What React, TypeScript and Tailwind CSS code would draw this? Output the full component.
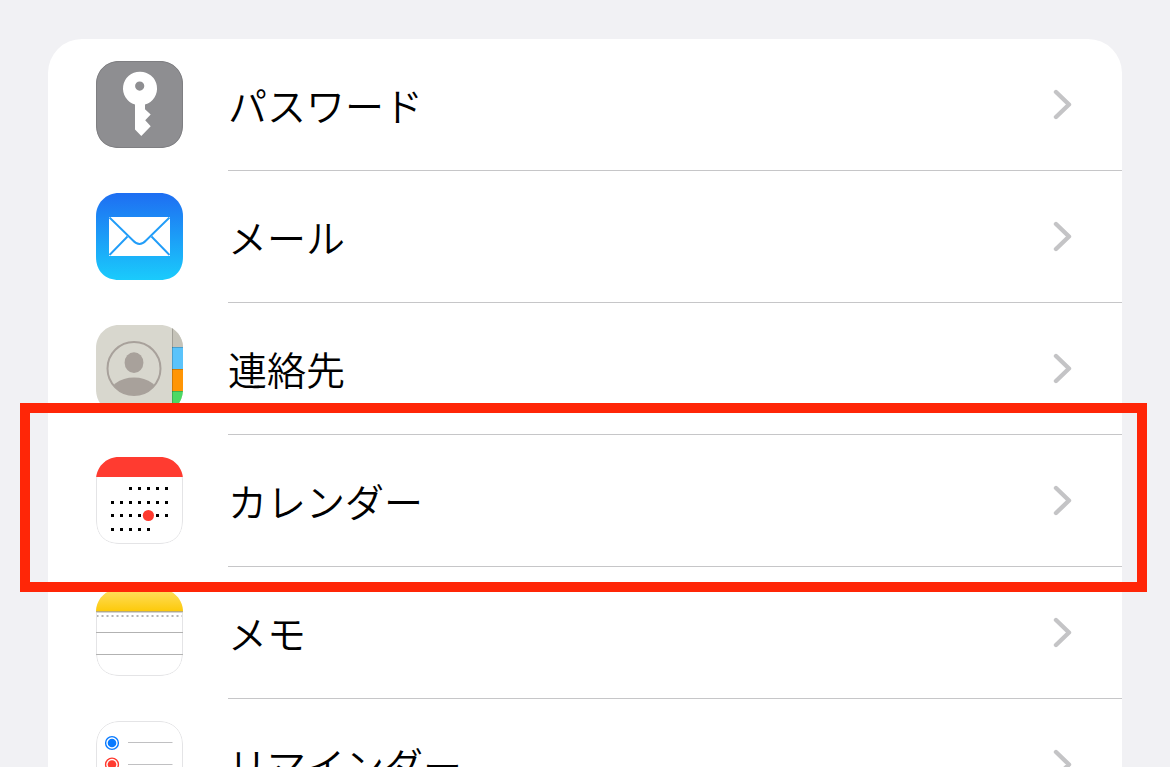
import type { ReactNode } from 'react';

type IconFrameProps = { id: string; outline?: string; overlay?: ReactNode; children: ReactNode };

function IconFrame({ id, outline, overlay, children }: IconFrameProps) {
  return (
    <svg viewBox="0 0 87 87" className="mb-px size-[87px] shrink-0" aria-hidden="true">
      <defs>
        <clipPath id={id}>
          <path d="M23 0H64C77 0 87 10 87 23V64C87 78 78 87 64 87H23C9 87 0 78 0 64V23C0 10 10 0 23 0Z" />
        </clipPath>
      </defs>
      <g clipPath={`url(#${id})`}>
        {children}
        {outline && (
          <path
            d="M23 .5H64C77 .5 86.500 10 86.500 23V64C86.500 78 78 86.500 64 86.500H23C9 86.500 .5 78 .5 64V23C.5 10 10 .5 23 .5Z"
            fill="none"
            stroke={outline}
          />
        )}
        {overlay}
      </g>
    </svg>
  );
}

function PasswordIcon() {
  return (
    <IconFrame id="clip-password" outline="#7f7f82">
      <rect width="87" height="87" fill="#8e8e91" />
      <path
        fill="#fff"
        fillRule="evenodd"
        d="M43.700 10.700a16.800 16.800 0 0 1 5.300 32.900V48.200L54.700 53.500L49.200 59.300L54.700 65.300L45.300 75L39 68.500V43.600A16.800 16.800 0 0 1 43.700 10.700ZM43.700 20.500a4.600 4.600 0 1 0 0 9.200a4.600 4.600 0 0 0 0-9.200Z"
      />
    </IconFrame>
  );
}

function MailIcon() {
  return (
    <IconFrame id="clip-mail">
      <linearGradient id="mail-sky" x1="0" y1="0" x2="0" y2="1">
        <stop offset="0" stopColor="#1e6ef2" />
        <stop offset="1" stopColor="#1acbfc" />
      </linearGradient>
      <rect width="87" height="87" fill="url(#mail-sky)" />
      <rect x="13" y="24" width="61" height="39" fill="#fff" />
      <g fill="none" stroke="#229df8" strokeWidth="1.900">
        <path d="M13.500 24.500L37 47.500Q43.500 54.500 50 47.500L73.500 24.500" />
        <path d="M31.500 43.500L13.500 62M55.500 43.500L73.500 62" />
      </g>
    </IconFrame>
  );
}

function ContactsIcon() {
  return (
    <IconFrame id="clip-contacts">
      <rect width="87" height="87" fill="#d8d7ce" />
      <rect x="76" width="11" height="22" fill="#c5c3b9" />
      <rect x="76" y="22" width="11" height="22" fill="#5ac3fb" />
      <rect x="76" y="44" width="11" height="22" fill="#ff9505" />
      <rect x="76" y="66" width="11" height="21" fill="#4cd964" />
      <path d="M76.500 0V87M76 22.500H87M76 44.500H87M76 66.500H87" stroke="#000" strokeOpacity=".18" />
      <clipPath id="clip-person">
        <circle cx="38" cy="43.500" r="26.500" />
      </clipPath>
      <g fill="#a8a19b">
        <ellipse cx="38" cy="37.700" rx="9.400" ry="10.400" />
        <ellipse cx="38" cy="72" rx="26" ry="19.500" clipPath="url(#clip-person)" />
      </g>
      <circle cx="38" cy="43.500" r="26.500" fill="none" stroke="#a8a19b" strokeWidth="2" />
    </IconFrame>
  );
}

const calendarRows = [
  { y: 30, from: 2, to: 6 },
  { y: 44, from: 0, to: 6 },
  { y: 57, from: 0, to: 6 },
  { y: 71, from: 0, to: 4 },
];

function CalendarIcon() {
  return (
    <IconFrame id="clip-calendar" outline="#e4e4e6" overlay={<rect width="87" height="20" fill="#ff3b30" />}>
      <rect width="87" height="87" fill="#fff" />
      {calendarRows.map(({ y, from, to }) =>
        Array.from({ length: to - from + 1 }, (_, i) => (
          <rect key={`${y}-${i}`} x={15 + (from + i) * 9} y={y} width="3" height="3" fill="#000" />
        )),
      )}
      <circle cx="52.400" cy="58.500" r="5.600" fill="#ff3b30" />
    </IconFrame>
  );
}

function NotesIcon() {
  return (
    <IconFrame
      id="clip-notes"
      outline="#e4e4e6"
      overlay={
        <>
          <linearGradient id="notes-gold" x1="0" y1="0" x2="0" y2="1">
            <stop offset="0" stopColor="#ffdf63" />
            <stop offset="1" stopColor="#fdca0b" />
          </linearGradient>
          <rect width="87" height="22" fill="url(#notes-gold)" />
          <rect y="22" width="87" height="1" fill="#b9aa77" />
          <rect y="23" width="87" height="1" fill="#d4d4d4" />
          <path d="M0 43.500H87M0 65.500H87" stroke="#b2b2b2" />
        </>
      }
    >
      <rect width="87" height="87" fill="#fff" />
      <path d="M.5 27H87" stroke="#b4b4b6" strokeWidth="2" strokeDasharray="2 3" />
    </IconFrame>
  );
}

const reminderItems = [
  { y: 22, color: '#087aff' },
  { y: 43.5, color: '#ff3b30' },
  { y: 65, color: '#ff9500' },
];

function RemindersIcon() {
  return (
    <IconFrame id="clip-reminders" outline="#e4e4e6">
      <rect width="87" height="87" fill="#fff" />
      {reminderItems.map(({ y, color }) => (
        <g key={color}>
          <circle cx="16" cy={y} r="6.400" fill="none" stroke={color} strokeWidth="1.400" />
          <circle cx="16" cy={y} r="4.300" fill={color} />
          <path d={`M32 ${Math.ceil(y) - 0.5}H76.500`} stroke="#c0c0c2" />
        </g>
      ))}
    </IconFrame>
  );
}

function Chevron() {
  return (
    <svg viewBox="0 0 20 31" className="h-[31px] w-5 shrink-0" aria-hidden="true">
      <path
        d="M4 3L17 15.500L4 28"
        fill="none"
        stroke="#c4c4c6"
        strokeWidth="4.400"
        strokeLinecap="round"
        strokeLinejoin="round"
      />
    </svg>
  );
}

const rows = [
  { id: 'passwords', label: 'パスワード', icon: <PasswordIcon /> },
  { id: 'mail', label: 'メール', icon: <MailIcon /> },
  { id: 'contacts', label: '連絡先', icon: <ContactsIcon /> },
  { id: 'calendar', label: 'カレンダー', icon: <CalendarIcon />, highlighted: true },
  { id: 'notes', label: 'メモ', icon: <NotesIcon /> },
  { id: 'reminders', label: 'リマインダー', icon: <RemindersIcon /> },
];

export default function App() {
  return (
    <main
      lang="ja"
      className="h-screen overflow-hidden bg-[#f1f1f4] px-12 pt-[39px] font-['Noto_Sans_CJK_JP',sans-serif] font-[350] text-black"
    >
      <ul className="rounded-[34px] bg-white">
        {rows.map((row) => (
          <li key={row.id} className="relative">
            <a href={`#${row.id}`} className="flex items-center gap-[45px] pl-12">
              {row.icon}
              <span className="flex h-[132px] min-w-0 flex-1 items-center justify-between border-b border-[#c6c6c8] pr-[50px]">
                <span className="text-[39px] leading-[55px]">{row.label}</span>
                <Chevron />
              </span>
            </a>
            {row.highlighted && (
              <div className="pointer-events-none absolute -top-8 -right-[25px] -bottom-[25px] -left-7 z-10 border-10 border-[#ff2607]" />
            )}
          </li>
        ))}
      </ul>
    </main>
  );
}
